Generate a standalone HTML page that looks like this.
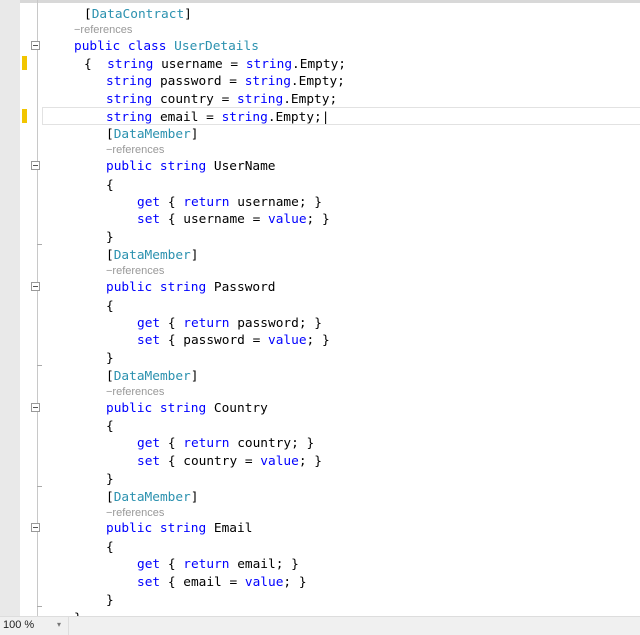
<!DOCTYPE html>
<html><head><style>
body{margin:0;width:640px;height:634px;background:#fff;position:relative;overflow:hidden;font-family:"DejaVu Sans Mono","Liberation Mono",monospace;}
.g{position:absolute;left:0;top:0;width:20px;height:616px;background:#e9e9e9}
.vl{position:absolute;left:37px;top:0;width:1px;height:616px;background:#c8c8c8}
.top{position:absolute;left:0;top:0;width:640px;height:3px;background:#d8d8d8}
.y{position:absolute;left:22px;width:5px;height:14px;background:#f2c500}
.f{position:absolute;left:31px;width:9px;height:9px;border:1px solid #999;background:#fff;box-sizing:border-box}
.f:after{content:"";position:absolute;left:1px;top:3px;width:5px;height:1px;background:#555}
.t{position:absolute;left:37px;width:5px;height:1px;background:#aaa}
.l{position:absolute;font-size:12.8px;line-height:16px;white-space:pre;color:#000;transform:translateY(-6px)}
.r{position:absolute;font-size:11px;line-height:12px;white-space:pre;color:#999;font-family:"Liberation Sans",sans-serif;transform:translateY(-5px)}
.k{color:#0000ff}.c{color:#2b91af}
.cur{position:absolute;left:42px;top:107px;width:600px;height:18px;border:1px solid #e2e2e2;box-sizing:border-box}
.bar{position:absolute;left:0;top:616px;width:640px;height:18px;background:#f0f0f0;border-top:1px solid #ddd}
</style></head><body>
<div class="top"></div><div class="g"></div><div class="vl"></div>
<div class="cur"></div>
<div class="y" style="top:56px"></div><div class="y" style="top:109px"></div>
<div class="f" style="top:41px"></div><div class="f" style="top:161px"></div><div class="f" style="top:282px"></div><div class="f" style="top:403px"></div><div class="f" style="top:523px"></div>
<div class="t" style="top:244px"></div><div class="t" style="top:365px"></div><div class="t" style="top:486px"></div><div class="t" style="top:606px"></div>
<div class="l" style="left:84px;top:13px">[<span class="c">DataContract</span>]</div>
<div class="r" style="left:74px;top:29px">−references</div>
<div class="l" style="left:74px;top:45px"><span class="k">public class</span> <span class="c">UserDetails</span></div>
<div class="l" style="left:84px;top:63px">{  <span class="k">string</span> username = <span class="k">string</span>.Empty;</div>
<div class="l" style="left:106px;top:80px"><span class="k">string</span> password = <span class="k">string</span>.Empty;</div>
<div class="l" style="left:106px;top:98px"><span class="k">string</span> country = <span class="k">string</span>.Empty;</div>
<div class="l" style="left:106px;top:116px"><span class="k">string</span> email = <span class="k">string</span>.Empty;|</div>

<div class="l" style="left:106px;top:133px">[<span class="c">DataMember</span>]</div>
<div class="r" style="left:106px;top:149px">−references</div>
<div class="l" style="left:106px;top:165px"><span class="k">public string</span> UserName</div>
<div class="l" style="left:106px;top:184px">{</div>
<div class="l" style="left:137px;top:201px"><span class="k">get</span> { <span class="k">return</span> username; }</div>
<div class="l" style="left:137px;top:218px"><span class="k">set</span> { username = <span class="k">value</span>; }</div>
<div class="l" style="left:106px;top:236px">}</div>

<div class="l" style="left:106px;top:254px">[<span class="c">DataMember</span>]</div>
<div class="r" style="left:106px;top:270px">−references</div>
<div class="l" style="left:106px;top:286px"><span class="k">public string</span> Password</div>
<div class="l" style="left:106px;top:305px">{</div>
<div class="l" style="left:137px;top:322px"><span class="k">get</span> { <span class="k">return</span> password; }</div>
<div class="l" style="left:137px;top:339px"><span class="k">set</span> { password = <span class="k">value</span>; }</div>
<div class="l" style="left:106px;top:357px">}</div>

<div class="l" style="left:106px;top:375px">[<span class="c">DataMember</span>]</div>
<div class="r" style="left:106px;top:391px">−references</div>
<div class="l" style="left:106px;top:407px"><span class="k">public string</span> Country</div>
<div class="l" style="left:106px;top:425px">{</div>
<div class="l" style="left:137px;top:442px"><span class="k">get</span> { <span class="k">return</span> country; }</div>
<div class="l" style="left:137px;top:460px"><span class="k">set</span> { country = <span class="k">value</span>; }</div>
<div class="l" style="left:106px;top:478px">}</div>

<div class="l" style="left:106px;top:496px">[<span class="c">DataMember</span>]</div>
<div class="r" style="left:106px;top:512px">−references</div>
<div class="l" style="left:106px;top:527px"><span class="k">public string</span> Email</div>
<div class="l" style="left:106px;top:546px">{</div>
<div class="l" style="left:137px;top:563px"><span class="k">get</span> { <span class="k">return</span> email; }</div>
<div class="l" style="left:137px;top:581px"><span class="k">set</span> { email = <span class="k">value</span>; }</div>
<div class="l" style="left:106px;top:599px">}</div>
<div class="l" style="left:74px;top:617px">}</div>
<div class="bar"><span style="position:absolute;left:3px;top:2px;font:11px 'Liberation Sans',sans-serif;color:#222">100 %</span><span style="position:absolute;left:57px;top:3px;font:8px 'DejaVu Sans',sans-serif;color:#777">▾</span><div style="position:absolute;left:68px;top:0;width:1px;height:18px;background:#ddd"></div></div>
</body></html>
